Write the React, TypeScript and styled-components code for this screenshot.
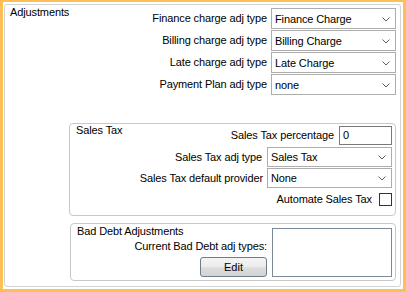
import React from "react";
import styled, { createGlobalStyle } from "styled-components";

const GlobalStyle = createGlobalStyle`
  html, body {
    margin: 0;
    padding: 0;
    background: #ffffff;
  }
  body {
    font-family: "Liberation Sans", Arial, sans-serif;
    font-size: 11px;
    line-height: 13px;
    letter-spacing: -0.12px;
    color: #000000;
  }
`

const Frame = styled.div`
  width: 406px;
  height: 292px;
  box-sizing: border-box;
  border: 3px solid #fdbf56;
  border-top-width: 2px;
  padding: 2px 2px 2px 1px;
  background: #ffffff;
  display: flex;
`

const Group = styled.div`
  flex: 1;
  display: flex;
  flex-direction: column;
  border: 1px solid #d3d3d3;
  border-radius: 3px;
`

const TopSection = styled.div`
  display: flex;
  padding: 1px 4px 0 5px;
`

const Title = styled.div`
  flex: 1;
  white-space: nowrap;
`

const Rows = styled.div<{ gap: number }>`
  display: flex;
  flex-direction: column;
  align-items: flex-end;
  gap: ${props => props.gap}px;
  padding-top: 2px;
`

const Row = styled.div<{ gap?: number }>`
  display: flex;
  align-items: center;
  gap: ${props => props.gap ?? 4}px;
  white-space: nowrap;
`

const Combo = styled.div<{ h?: number }>`
  width: 125px;
  height: ${props => props.h ?? 21}px;
  box-sizing: border-box;
  border: 1px solid #adadad;
  background: #ffffff;
  display: flex;
  align-items: center;
  justify-content: space-between;
  padding: 1px 5px 0 3px;
  font-size: 11px;
`

const TextBox = styled.div`
  width: 53px;
  height: 19px;
  box-sizing: border-box;
  border: 1px solid #7a7a7a;
  padding: 2px 3px 0 3px;
  background: #ffffff;
`

const SubBox = styled.div<{ left: number; h: number; top: number }>`
  margin: ${props => props.top}px 4px 0 ${props => props.left}px;
  height: ${props => props.h}px;
  box-sizing: border-box;
  border: 1px solid #c8c8c8;
  border-radius: 4px;
  display: flex;
  padding: 0 3px 0 6px;
`

const CheckBox = styled.div`
  width: 13px;
  height: 13px;
  box-sizing: border-box;
  border: 1px solid #333333;
  background: #ffffff;
`

const LeftCol = styled.div`
  flex: 1;
  display: flex;
  flex-direction: column;
  padding-top: 1px;
`

const RightLabel = styled.div`
  align-self: flex-end;
  margin-top: 2px;
  white-space: nowrap;
`

const EditButton = styled.button`
  align-self: flex-end;
  margin-top: 4px;
  width: 67px;
  height: 20px;
  box-sizing: border-box;
  border: 1px solid #6d7d8c;
  border-radius: 3px;
  background: linear-gradient(#f4f4f4, #ececec 48%, #dedede 52%, #d3d3d3);
  font-family: "Liberation Sans", Arial, sans-serif;
  font-size: 11px;
  color: #000000;
  padding: 0;
`

const ListBox = styled.div`
  width: 120px;
  height: 49px;
  margin: 4px 0 0 5px;
  box-sizing: border-box;
  border: 1px solid #7a8a99;
  background: #ffffff;
`

const Chevron = () => (
  <svg width="8" height="5" viewBox="0 0 8 5">
    <path d="M0.5 0.5 L4 4 L7.5 0.5" fill="none" stroke="#606060" strokeWidth="1" />
  </svg>
)

const ComboField = ({ value, h }: { value: string; h?: number }) => (
  <Combo h={h}>
    <span>{value}</span>
    <Chevron />
  </Combo>
)

export default function App() {
  return (
    <>
      <GlobalStyle />
      <Frame>
        <Group>
          <TopSection>
            <Title>Adjustments</Title>
            <Rows gap={1}>
              <Row>
                <span>Finance charge adj type</span>
                <ComboField value="Finance Charge" />
              </Row>
              <Row>
                <span>Billing charge adj type</span>
                <ComboField value="Billing Charge" />
              </Row>
              <Row>
                <span>Late charge adj type</span>
                <ComboField value="Late Charge" />
              </Row>
              <Row>
                <span>Payment Plan adj type</span>
                <ComboField value="none" />
              </Row>
            </Rows>
          </TopSection>

          <SubBox left={64} top={28} h={93}>
            <Title>Sales Tax</Title>
            <Rows gap={1}>
              <Row gap={5}>
                <span>Sales Tax percentage</span>
                <TextBox>0</TextBox>
              </Row>
              <Row gap={5} style={{ marginTop: 1 }}>
                <span>Sales Tax adj type</span>
                <ComboField value="Sales Tax" h={20} />
              </Row>
              <Row gap={4}>
                <span>Sales Tax default provider</span>
                <ComboField value="None" h={20} />
              </Row>
              <Row gap={7} style={{ marginTop: 4 }}>
                <span>Automate Sales Tax</span>
                <CheckBox />
              </Row>
            </Rows>
          </SubBox>

          <SubBox left={65} top={7} h={58}>
            <LeftCol>
              <div>Bad Debt Adjustments</div>
              <RightLabel>Current Bad Debt adj types:</RightLabel>
              <EditButton>Edit</EditButton>
            </LeftCol>
            <ListBox />
          </SubBox>
        </Group>
      </Frame>
    </>
  );
}
